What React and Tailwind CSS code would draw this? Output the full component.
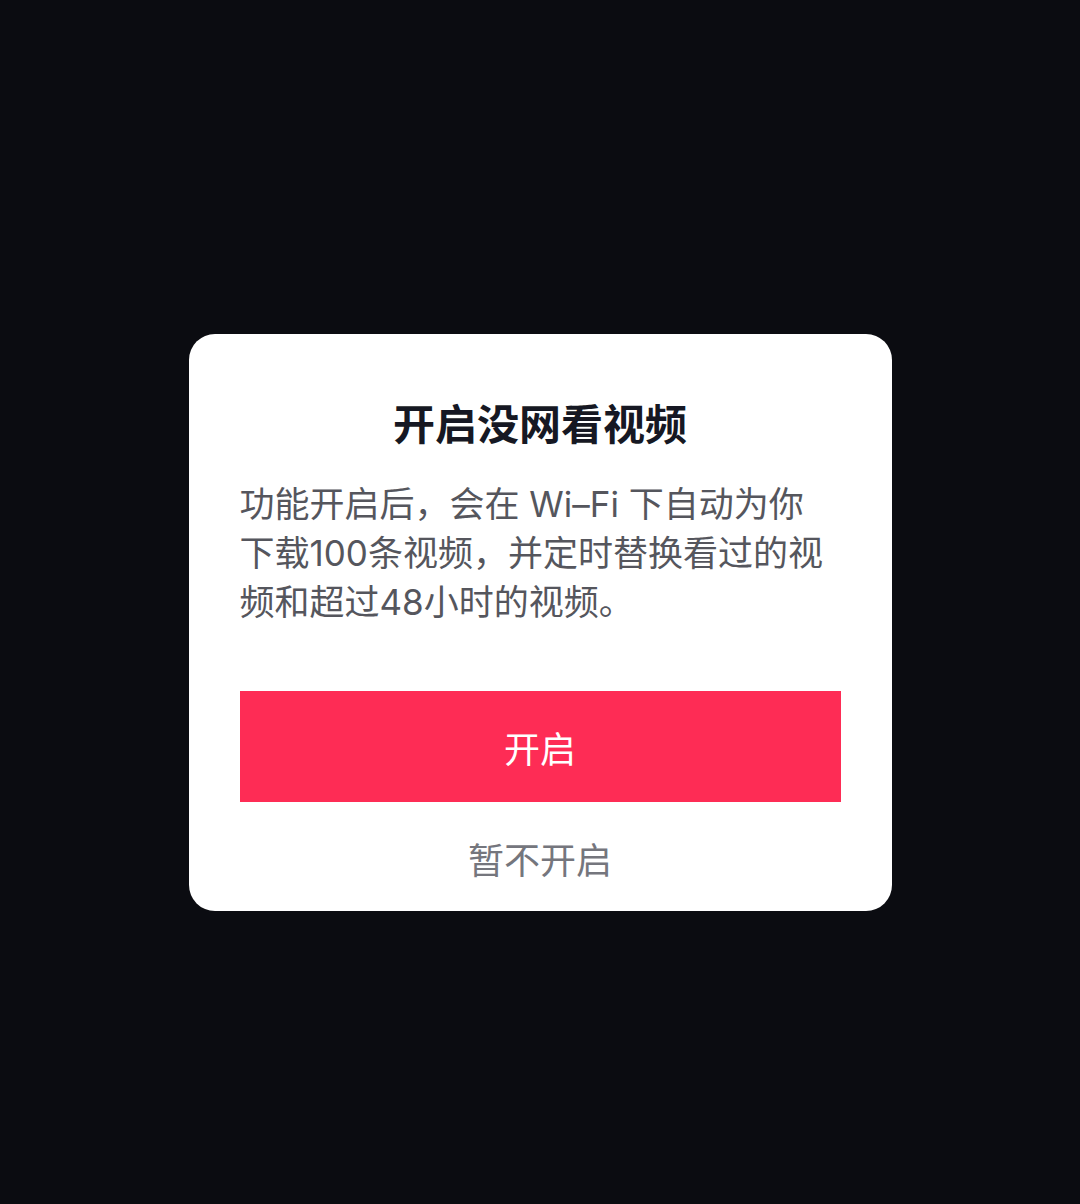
const App = () => {
  return (
    <div
      className="min-h-[1204px] w-full bg-[#0b0c11] flex justify-center pt-[334px]"
      style={{ fontFamily: '"Noto Sans CJK SC", "Noto Sans", sans-serif' }}
    >
      <div className="w-[703px] h-[577px] rounded-[26px] bg-white px-[51px] pt-[63px]">
        {/* Title */}
        <h2 className="text-center text-[42px] leading-[50px] font-bold text-[#161823]">
          开启没网看视频
        </h2>

        {/* Body */}
        <p
          className="mt-[33px] text-[35px] leading-[49px] text-[#55565d] whitespace-nowrap"
          style={{ fontFamily: 'Inter, "Noto Sans CJK SC", sans-serif' }}
        >
          功能开启后，会在 Wi–Fi 下自动为你
          <br />
          下载100条视频，并定时替换看过的视
          <br />
          频和超过48小时的视频。
        </p>

        {/* Actions */}
        <button className="mt-[64px] w-full h-[111px] bg-[#fe2c55] text-white text-[36px] leading-none">
          开启
        </button>
        <button className="mt-[31px] w-full text-center text-[36px] leading-[50px] text-[#75767d]">
          暂不开启
        </button>
      </div>
    </div>
  );
};

export default App;
